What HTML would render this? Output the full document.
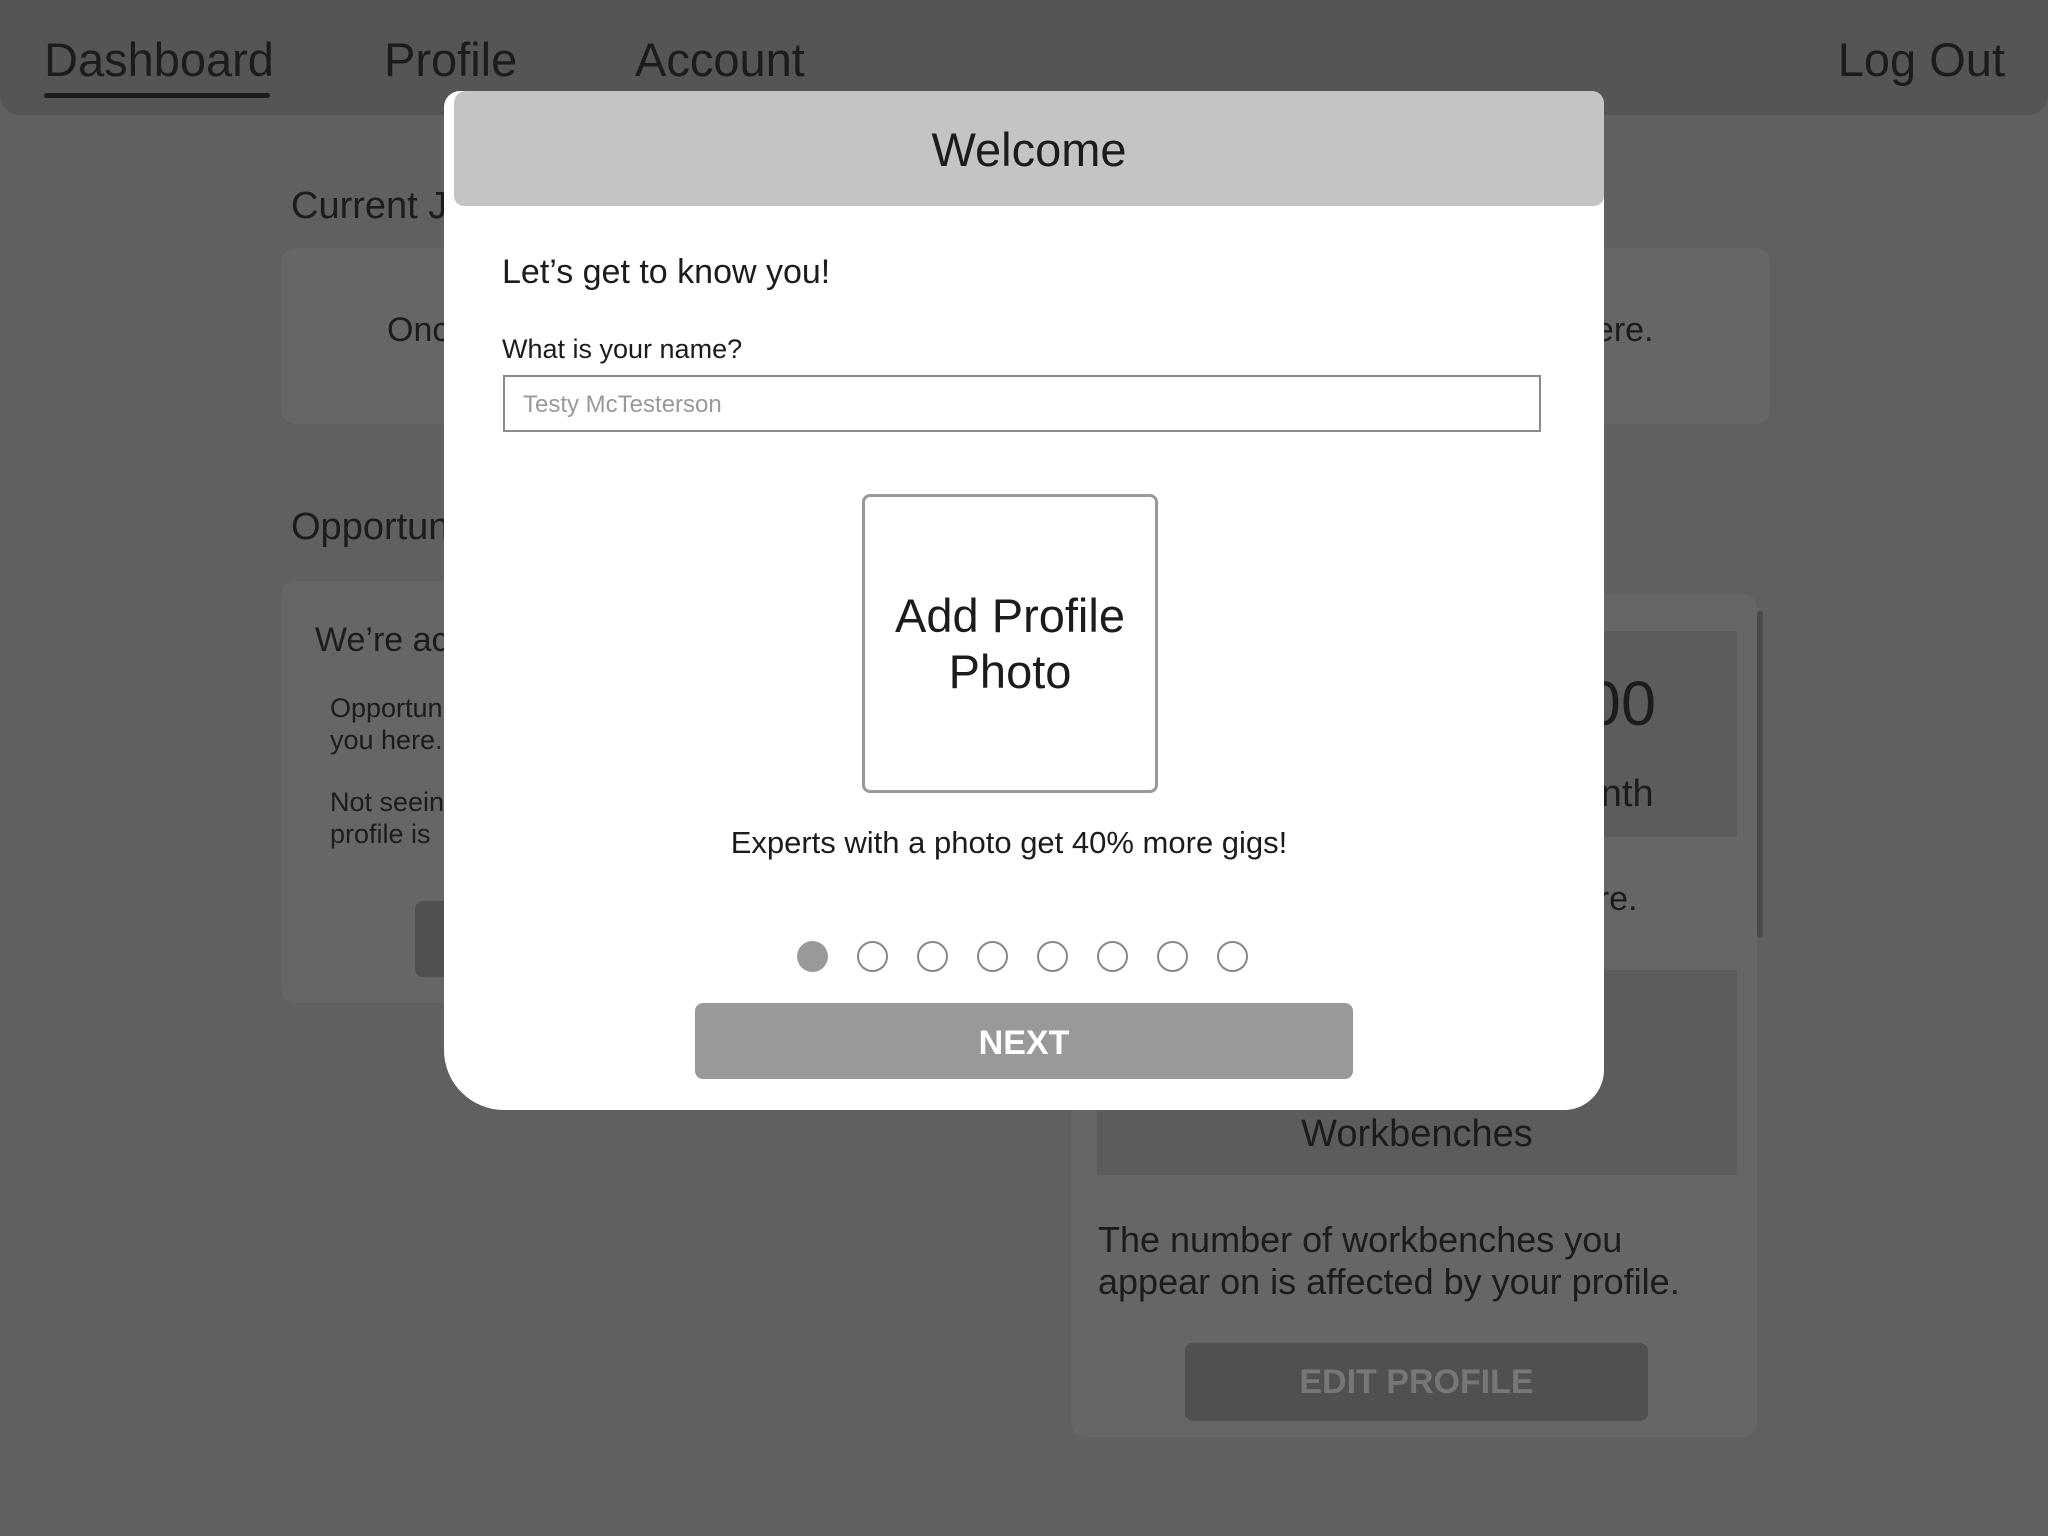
<!DOCTYPE html>
<html><head><meta charset="utf-8"><style>
*{margin:0;padding:0;box-sizing:border-box}
body{width:2048px;height:1536px;background:#606060;position:relative;overflow:hidden;font-family:"Liberation Sans",sans-serif;color:#1c1c1c}
.a{position:absolute;white-space:nowrap}
.card{position:absolute;background:#666;border-radius:14px}
.inner{position:absolute;background:#5c5c5c}
</style></head><body>
<div class="a" style="left:0;top:0;width:2048px;height:115px;background:#555;border-radius:0 0 20px 20px"></div>
<div class="a" style="left:44px;top:32px;font-size:47px">Dashboard</div>
<div class="a" style="left:44px;top:93px;width:226px;height:5px;background:#1c1c1c;border-radius:3px"></div>
<div class="a" style="left:384px;top:32px;font-size:47px">Profile</div>
<div class="a" style="left:635px;top:32px;font-size:47px">Account</div>
<div class="a" style="right:43px;top:32px;font-size:47px">Log Out</div>

<div class="a" style="left:291px;top:185px;font-size:38px">Current Jobs</div>
<div class="card" style="left:281px;top:248px;width:1489px;height:176px"></div>
<div class="a" style="left:387px;top:311px;font-size:34px">Once</div>
<div class="a" style="left:1576px;top:311px;font-size:34px">here.</div>

<div class="a" style="left:291px;top:506px;font-size:38px">Opportunities</div>
<div class="card" style="left:281px;top:581px;width:800px;height:422px"></div>
<div class="a" style="left:315px;top:621px;font-size:34px">We’re ac</div>
<div class="a" style="left:330px;top:692px;font-size:27px;line-height:32px">Opportun<br>you here.</div>
<div class="a" style="left:330px;top:786px;font-size:27px;line-height:32px">Not seein<br>profile is</div>
<div class="a" style="left:415px;top:901px;width:200px;height:76px;background:#505050;border-radius:8px"></div>

<div class="card" style="left:1071px;top:594px;width:686px;height:843px"></div>
<div class="a" style="left:1757px;top:611px;width:6px;height:327px;background:#4a4a4a;border-radius:3px"></div>
<div class="inner" style="left:1097px;top:631px;width:640px;height:206px"></div>
<div class="a" style="right:392px;top:668px;font-size:63px">00</div>
<div class="a" style="left:1548px;top:773px;font-size:38px">Month</div>
<div class="a" style="left:1560px;top:880px;font-size:34px">here.</div>
<div class="inner" style="left:1097px;top:970px;width:640px;height:205px"></div>
<div class="a" style="left:1097px;width:640px;text-align:center;top:1113px;font-size:38px">Workbenches</div>
<div class="a" style="left:1098px;top:1219px;font-size:36px;line-height:42px">The number of workbenches you<br>appear on is affected by your profile.</div>
<div class="a" style="left:1185px;top:1343px;width:463px;height:78px;background:#505050;border-radius:8px;color:#777;font-weight:bold;font-size:34px;text-align:center;line-height:78px">EDIT PROFILE</div>

<div class="a" style="left:444px;top:91px;width:1160px;height:1019px;background:#fff;border-radius:16px 16px 40px 60px"></div>
<div class="a" style="left:454px;top:91px;width:1150px;height:115px;background:#c4c4c4;border-radius:12px 12px 10px 10px"></div>
<div class="a" style="left:454px;width:1150px;text-align:center;top:122px;font-size:47px">Welcome</div>
<div class="a" style="left:502px;top:253px;font-size:34px">Let’s get to know you!</div>
<div class="a" style="left:502px;top:334px;font-size:27px">What is your name?</div>
<div class="a" style="left:503px;top:375px;width:1038px;height:57px;border:2px solid #8a8a8a;font-size:24px;color:#999;padding-left:18px;line-height:55px">Testy McTesterson</div>
<div class="a" style="left:862px;top:494px;width:296px;height:299px;border:3px solid #999;border-radius:8px"></div>
<div class="a" style="left:862px;width:296px;text-align:center;top:588px;font-size:47px;line-height:56px">Add Profile<br>Photo</div>
<div class="a" style="left:444px;width:1160px;text-align:center;top:825px;font-size:31px;padding-right:30px">Experts with a photo get 40% more gigs!</div>
<div class="a" style="left:797px;top:941px;width:31px;height:31px;border-radius:50%;background:#999"></div>
<div class="a" style="left:857px;top:941px;width:31px;height:31px;border-radius:50%;border:2px solid #888"></div>
<div class="a" style="left:917px;top:941px;width:31px;height:31px;border-radius:50%;border:2px solid #888"></div>
<div class="a" style="left:977px;top:941px;width:31px;height:31px;border-radius:50%;border:2px solid #888"></div>
<div class="a" style="left:1037px;top:941px;width:31px;height:31px;border-radius:50%;border:2px solid #888"></div>
<div class="a" style="left:1097px;top:941px;width:31px;height:31px;border-radius:50%;border:2px solid #888"></div>
<div class="a" style="left:1157px;top:941px;width:31px;height:31px;border-radius:50%;border:2px solid #888"></div>
<div class="a" style="left:1217px;top:941px;width:31px;height:31px;border-radius:50%;border:2px solid #888"></div>
<div class="a" style="left:695px;top:1003px;width:658px;height:76px;background:#999;border-radius:8px;color:#fff;font-weight:bold;font-size:34px;text-align:center;line-height:80px">NEXT</div>
</body></html>
